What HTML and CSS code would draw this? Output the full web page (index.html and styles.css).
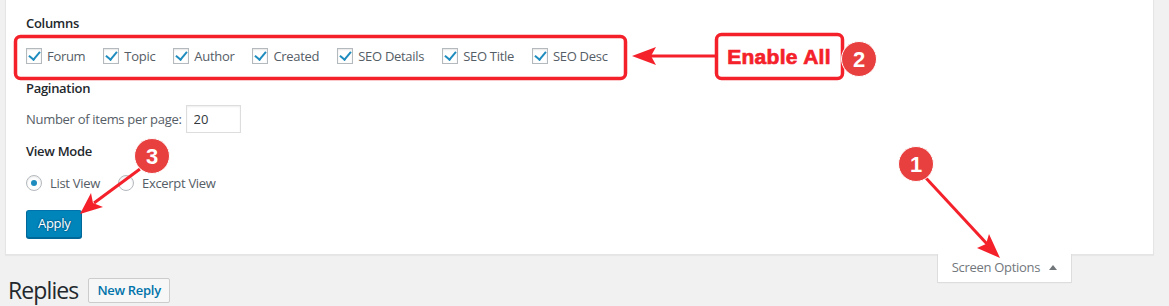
FILE: index.html
```html
<!DOCTYPE html>
<html>
<head>
    <title>Replies - Screen Options</title>
    <meta name="viewport" content="width=device-width, initial-scale=1.0">
    <link rel="stylesheet" href="styles.css">
</head>
<body>
    <div class="screen-options">
        <fieldset class="group">
            <legend>Columns</legend>
            <div class="checks">
                <label><input type="checkbox" checked> Forum</label>
                <label><input type="checkbox" checked> Topic</label>
                <label><input type="checkbox" checked> Author</label>
                <label><input type="checkbox" checked> Created</label>
                <label><input type="checkbox" checked> SEO Details</label>
                <label><input type="checkbox" checked> SEO Title</label>
                <label><input type="checkbox" checked> SEO Desc</label>
            </div>
        </fieldset>
        <fieldset class="group">
            <legend>Pagination</legend>
            <label class="per-page">Number of items per page: <input type="text" value="20"></label>
        </fieldset>
        <fieldset class="group">
            <legend>View Mode</legend>
            <div class="radios">
                <label><input type="radio" name="mode" checked> List View</label>
                <label><input type="radio" name="mode"> Excerpt View</label>
            </div>
        </fieldset>
        <button class="button-primary">Apply</button>
    </div>

    <div class="meta-link">Screen Options <span class="arrow"></span></div>

    <div class="page-head">
        <h1>Replies</h1>
        <a class="add-new" href="#">New Reply</a>
    </div>

    <!-- tutorial annotations drawn over the page -->
    <svg class="notes" width="1169" height="306" viewBox="0 0 1169 306">
        <rect x="15.5" y="36.5" width="610" height="42" rx="5" class="box"/>
        <rect x="716.5" y="34.5" width="126" height="44" rx="5" class="box"/>
        <text x="779" y="64" class="label">Enable All</text>

        <line x1="716" y1="56" x2="648" y2="56" class="line"/>
        <path d="M632 56 L656 47 L651 56 L656 65 Z" class="head"/>

        <line x1="140" y1="169" x2="94" y2="203" class="line"/>
        <path d="M80 214 L91 193 L93 203 L103 207 Z" class="head"/>

        <line x1="925" y1="177" x2="988" y2="245" class="line"/>
        <path d="M1000 258 L977 248 L986 244 L989 234 Z" class="head"/>

        <circle cx="859" cy="59" r="17.5" class="badge"/>
        <text x="859" y="67" class="num">2</text>
        <circle cx="152" cy="156" r="17.5" class="badge"/>
        <text x="152" y="164" class="num">3</text>
        <circle cx="916" cy="164" r="17.5" class="badge"/>
        <text x="916" y="172" class="num">1</text>
    </svg>
</body>
</html>
```

FILE: styles.css
```css
body {
    margin: 0;
    background-color: #f1f1f1;
    font-family: "Open Sans", "Noto Sans", sans-serif;
    font-size: 13px;
    letter-spacing: -0.3px;
    color: #444444;
    position: relative;
    height: 306px;
    overflow: hidden;
}
.screen-options {
    margin: 0 15px 0 5px;
    background-color: #ffffff;
    border: 1px solid #e5e5e5;
    border-top: none;
    box-shadow: 0 1px 1px rgba(0, 0, 0, 0.04);
    padding: 14px 20px 16px;
}
.group {
    border: none;
    margin: 0;
    padding: 0;
}
legend {
    padding: 0;
    font-weight: 600;
    color: #23282d;
    line-height: 18px;
}
.checks {
    display: flex;
    margin-top: 14px;
    margin-bottom: 13px;
    height: 20px;
    align-items: center;
}
.checks label {
    display: flex;
    align-items: center;
    margin-right: 18px;
    color: #555d66;
}
input[type="checkbox"],
input[type="radio"] {
    appearance: none;
    -webkit-appearance: none;
    width: 16px;
    height: 16px;
    margin: 0 5px 0 0;
    border: 1px solid #b4b9be;
    background-color: #ffffff;
    box-shadow: inset 0 1px 2px rgba(0, 0, 0, 0.1);
    position: relative;
    box-sizing: border-box;
}
input[type="checkbox"]:checked::before {
    content: "";
    position: absolute;
    left: 4px;
    top: 0px;
    width: 5px;
    height: 9px;
    border-right: 2.5px solid #1e8cbe;
    border-bottom: 2.5px solid #1e8cbe;
    transform: rotate(40deg);
}
input[type="radio"] {
    border-radius: 50%;
    margin-right: 8px;
}
input[type="radio"]:checked::before {
    content: "";
    position: absolute;
    left: 4px;
    top: 4px;
    width: 6px;
    height: 6px;
    border-radius: 50%;
    background-color: #1e8cbe;
}
.per-page {
    display: flex;
    align-items: center;
    margin-top: 8px;
    margin-bottom: 9px;
    color: #555d66;
}
.per-page input {
    width: 55px;
    height: 28px;
    box-sizing: border-box;
    margin-left: 4px;
    border: 1px solid #dddddd;
    box-shadow: inset 0 1px 2px rgba(0, 0, 0, 0.07);
    font-family: inherit;
    font-size: 13px;
    color: #32373c;
    padding: 0 7px;
}
.radios {
    display: flex;
    align-items: center;
    height: 20px;
    margin-top: 13px;
    margin-bottom: 17px;
}
.radios label {
    display: flex;
    align-items: center;
    margin-right: 18px;
    color: #555d66;
}
.button-primary {
    display: block;
    height: 28px;
    padding: 0 11px 2px;
    font-family: inherit;
    font-size: 13px;
    letter-spacing: -0.3px;
    color: #ffffff;
    background-color: #0085ba;
    border: 1px solid #0073aa;
    border-color: #0073aa #006799 #006799;
    border-radius: 3px;
    box-shadow: 0 1px 0 #006799;
    text-shadow: 0 -1px 1px #006799, 1px 0 1px #006799, 0 1px 1px #006799, -1px 0 1px #006799;
}
.meta-link {
    float: right;
    margin: -1px 97px 0 0;
    width: 135px;
    height: 29px;
    box-sizing: border-box;
    background-color: #ffffff;
    border: 1px solid #dddddd;
    border-top: none;
    box-shadow: 0 1px 1px -1px rgba(0, 0, 0, 0.1);
    color: #72777c;
    text-align: center;
    line-height: 27px;
}
.meta-link .arrow {
    display: inline-block;
    margin-left: 6px;
    vertical-align: 2px;
    border-left: 4px solid transparent;
    border-right: 4px solid transparent;
    border-bottom: 5px solid #72777c;
}
.page-head {
    display: flex;
    align-items: center;
    padding: 21px 0 0 8px;
}
h1 {
    margin: 0;
    font-size: 23px;
    font-weight: 400;
    letter-spacing: -0.9px;
    color: #23282d;
    line-height: 29px;
}
.add-new {
    margin-left: 10px;
    padding: 3px 8px;
    border: 1px solid #cccccc;
    border-radius: 2px;
    background-color: #f7f7f7;
    color: #0073aa;
    font-weight: 600;
    text-decoration: none;
    line-height: 17px;
}
.notes {
    position: absolute;
    left: 0;
    top: 0;
    pointer-events: none;
}
.box {
    fill: none;
    stroke: #f4212b;
    stroke-width: 3.5;
}
.line {
    stroke: #f4212b;
    stroke-width: 3;
}
.head {
    fill: #f4212b;
}
.label {
    font-family: "Liberation Sans", Arial, sans-serif;
    font-weight: 700;
    font-size: 21px;
    fill: #f4212b;
    stroke: #f4212b;
    stroke-width: 0.7;
    text-anchor: middle;
    letter-spacing: 0.3px;
}
.badge {
    fill: #e8403f;
    stroke: #ffffff;
    stroke-width: 1;
}
.num {
    font-family: "Liberation Sans", Arial, sans-serif;
    font-weight: 700;
    font-size: 22px;
    fill: #ffffff;
    text-anchor: middle;
    letter-spacing: 0;
}
```
